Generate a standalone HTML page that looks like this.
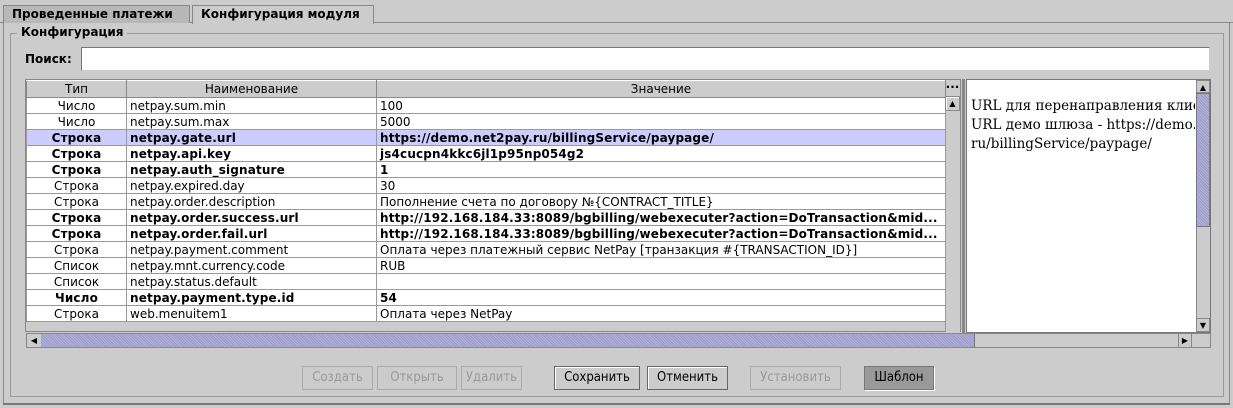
<!DOCTYPE html>
<html><head><meta charset="utf-8"><style>
*{box-sizing:border-box;margin:0;padding:0}
body{width:1233px;height:408px;background:#cccccc;font-family:"DejaVu Sans","Liberation Sans",sans-serif;font-size:12px;color:#000;position:relative;overflow:hidden}
.a{position:absolute}
.tab{position:absolute;top:5px;height:18px;font-weight:bold;font-size:12px;line-height:17px;padding-left:8px;border:1px solid #888;border-bottom:none}
table{border-collapse:collapse;table-layout:fixed;position:absolute;left:26px;top:80px;width:919px;background:#fff}
td{border:1px solid #999;height:16px;line-height:14px;padding:0 3px;white-space:nowrap;overflow:hidden;font-size:12px}
th{background:#ccc;font-weight:normal;height:17px;border:1px solid #888;border-top:1px solid #fff;font-size:12px;line-height:15px}
td.c{text-align:center}
tr.b td{font-weight:bold;letter-spacing:0.15px}
tr.s td{background:#ccccff}
.btn{position:absolute;top:366px;height:24px;line-height:22px;text-align:center;font-family:"DejaVu Sans Condensed","DejaVu Sans",sans-serif;font-size:13px;border:1px solid #999}
.dis{color:#999;border-color:#aaa}
.en{border:1px solid #666;box-shadow:inset 1px 1px 0 #fff;background:#ccc}
.pat{background-color:#9999cc;background-image:repeating-linear-gradient(45deg,rgba(255,255,255,.25) 0 1px,transparent 1px 2px)}
</style></head><body>
<div class="a" style="left:0;top:22px;width:1233px;height:1px;background:#888"></div>
<div class="tab" style="left:3px;width:187px;background:#b8b8b8">Проведенные платежи</div>
<div class="tab" style="left:192px;width:182px;background:#cccccc;height:19px;border-color:#888">Конфигурация модуля</div>
<div class="a" style="left:3px;top:22px;width:1227px;height:383px;border:1px solid #888;border-top:none;border-bottom:2px solid #777"></div>
<div class="a" style="left:10px;top:33px;width:1214px;height:364px;border:1px solid #999"></div>
<div class="a" style="left:17px;top:25px;background:#ccc;padding:0 4px;font-weight:bold">Конфигурация</div>
<div class="a" style="left:25px;top:52px;font-weight:bold">Поиск:</div>
<div class="a" style="left:81px;top:47px;width:1129px;height:24px;background:#fff;border:1px solid #777;border-right-color:#ccc;border-bottom-color:#ccc"></div>
<div class="a" style="left:25px;top:79px;width:936px;height:253px;background:#ccc;border:1px solid #888"></div>
<table>
<colgroup><col style="width:100px"><col style="width:250px"><col style="width:569px"></colgroup>
<tr><th>Тип</th><th>Наименование</th><th>Значение</th></tr>
<tr><td class="c">Число</td><td>netpay.sum.min</td><td>100</td></tr>
<tr><td class="c">Число</td><td>netpay.sum.max</td><td>5000</td></tr>
<tr class="b s"><td class="c">Строка</td><td>netpay.gate.url</td><td>https://demo.net2pay.ru/billingService/paypage/</td></tr>
<tr class="b"><td class="c">Строка</td><td>netpay.api.key</td><td>js4cucpn4kkc6jl1p95np054g2</td></tr>
<tr class="b"><td class="c">Строка</td><td>netpay.auth_signature</td><td>1</td></tr>
<tr><td class="c">Строка</td><td>netpay.expired.day</td><td>30</td></tr>
<tr><td class="c">Строка</td><td>netpay.order.description</td><td>Пополнение счета по договору №{CONTRACT_TITLE}</td></tr>
<tr class="b"><td class="c">Строка</td><td>netpay.order.success.url</td><td>http://192.168.184.33:8089/bgbilling/webexecuter?action=DoTransaction&amp;mid...</td></tr>
<tr class="b"><td class="c">Строка</td><td>netpay.order.fail.url</td><td>http://192.168.184.33:8089/bgbilling/webexecuter?action=DoTransaction&amp;mid...</td></tr>
<tr><td class="c">Строка</td><td>netpay.payment.comment</td><td>Оплата через платежный сервис NetPay [транзакция #{TRANSACTION_ID}]</td></tr>
<tr><td class="c">Список</td><td>netpay.mnt.currency.code</td><td>RUB</td></tr>
<tr><td class="c">Список</td><td>netpay.status.default</td><td></td></tr>
<tr class="b"><td class="c">Число</td><td>netpay.payment.type.id</td><td>54</td></tr>
<tr><td class="c">Строка</td><td>web.menuitem1</td><td>Оплата через NetPay</td></tr>
</table>
<div class="a" style="left:945px;top:80px;width:15px;height:16px;text-align:center;line-height:8px;font-weight:bold">...</div>
<div class="a" style="left:945px;top:96px;width:15px;height:236px;background:#ccc;border-left:1px solid #999"></div>
<div class="a" style="left:945px;top:96px;width:15px;height:15px;border:1px solid #888;box-shadow:inset 1px 1px #fff;font-size:8px;text-align:center;line-height:13px">▲</div>
<div class="a" style="left:962px;top:79px;width:3px;height:254px;background:#888"></div>
<div class="a" style="left:966px;top:79px;width:245px;height:254px;background:#fff;border:1px solid #777"></div>
<div class="a" style="left:971px;top:97px;width:224px;overflow:hidden;white-space:nowrap;font-family:'DejaVu Serif','Liberation Serif',serif;font-size:13.5px;line-height:19px">URL для перенаправления клиента<br>URL демо шлюза - https://demo.net2pay.<br>ru/billingService/paypage/</div>
<div class="a" style="left:1196px;top:80px;width:14px;height:252px;background:#ccc;border-left:1px solid #888"></div>
<div class="a" style="left:1196px;top:80px;width:14px;height:13px;font-size:8px;text-align:center;line-height:13px;border:1px solid #888">▲</div>
<div class="a pat" style="left:1196px;top:93px;width:14px;height:134px;border:1px solid #777"></div>
<div class="a" style="left:1196px;top:318px;width:14px;height:14px;font-size:8px;text-align:center;line-height:13px;border:1px solid #888">▼</div>
<div class="a" style="left:26px;top:333px;width:1185px;height:15px;background:#ccc;border:1px solid #888"></div>
<div class="a" style="left:27px;top:334px;width:14px;height:13px;font-size:8px;text-align:center;line-height:13px">◀</div>
<div class="a pat" style="left:41px;top:334px;width:934px;height:13px;border-right:1px solid #777"></div>
<div class="a" style="left:1178px;top:334px;width:14px;height:13px;font-size:8px;text-align:center;line-height:13px;border-left:1px solid #888;border-right:1px solid #888">▶</div>
<div class="btn dis" style="left:302px;width:71px">Создать</div>
<div class="btn dis" style="left:377px;width:80px">Открыть</div>
<div class="btn dis" style="left:461px;width:61px">Удалить</div>
<div class="btn en" style="left:554px;width:86px">Сохранить</div>
<div class="btn en" style="left:647px;width:81px">Отменить</div>
<div class="btn dis" style="left:750px;width:91px">Установить</div>
<div class="btn" style="left:864px;width:70px;background:#999;border:1px solid #777;box-shadow:1px 1px 0 #fff">Шаблон</div>
</body></html>
